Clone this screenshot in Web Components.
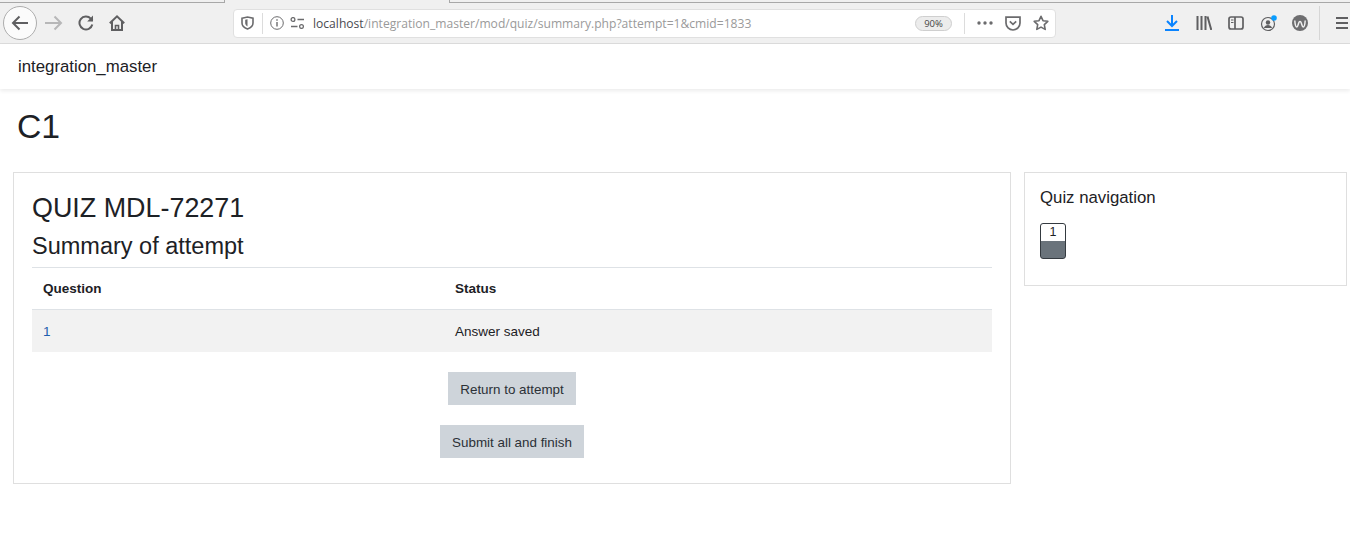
<!DOCTYPE html>
<html>
<head>
<meta charset="utf-8">
<title>Summary of attempt</title>
<style>
  html, body { margin: 0; padding: 0; background: #fff; }
  body { font-family: "Liberation Sans", Arial, sans-serif; color: #1d2125; overflow: hidden; }
</style>
</head>
<body>
<browser-bar url-host="localhost" url-path="/integration_master/mod/quiz/summary.php?attempt=1&amp;cmid=1833" zoom="90%"></browser-bar>
<site-nav>integration_master</site-nav>
<page-title>C1</page-title>
<page-columns>
  <quiz-summary>
    <h2 slot="name">QUIZ MDL-72271</h2>
    <h3 slot="sub">Summary of attempt</h3>
    <summary-table slot="table" question="1" status="Answer saved"></summary-table>
    <plain-button slot="actions">Return to attempt</plain-button>
    <plain-button slot="actions">Submit all and finish</plain-button>
  </quiz-summary>
  <quiz-nav></quiz-nav>
</page-columns>

<script>
class browserBar extends HTMLElement {
  constructor () {
    super()
    this.shadow = this.attachShadow({ mode: 'open' })
  }

  connectedCallback () {
    this.render()
  }

  render () {
    const host = this.getAttribute('url-host')
    const path = this.getAttribute('url-path')
    const zoom = this.getAttribute('zoom')
    this.shadow.innerHTML =
      /* html */`
        <style>
          :host{
            display: block;
            height: 44px;
            box-sizing: border-box;
            background: #f0f0f0;
            border-bottom: 1px solid #dcdcdc;
            position: relative;
            font-family: "Open Sans", sans-serif;
          }
          .tabline{
            position: absolute;
            top: 2px;
            left: 0;
            right: 0;
            height: 1px;
            background: #a8a8a8;
          }
          .tabgap{
            position: absolute;
            top: 0;
            left: 224px;
            width: 226px;
            height: 3px;
            box-sizing: border-box;
            background: #f0f0f0;
            border-left: 1px solid #a8a8a8;
            border-right: 1px solid #a8a8a8;
          }
          .row{
            display: flex;
            align-items: center;
            height: 43px;
            padding: 3px 0 0 3px;
            box-sizing: border-box;
          }
          svg{
            display: block;
            flex: none;
          }
          .back{
            width: 34px;
            height: 34px;
            box-sizing: border-box;
            border: 1px solid #adadad;
            border-radius: 50%;
            background: #fbfbfb;
            display: flex;
            align-items: center;
            justify-content: center;
            flex: none;
          }
          .nav{
            display: flex;
            align-items: center;
            gap: 15px;
            margin-left: 8px;
          }
          .url{
            margin-left: 108px;
            width: 823px;
            height: 29px;
            box-sizing: border-box;
            background: #fff;
            border: 1px solid #e0e0e0;
            border-radius: 4px;
            display: flex;
            align-items: center;
            padding-left: 7px;
            flex: none;
          }
          .sep{
            width: 1px;
            height: 21px;
            background: #dcdcdc;
            flex: none;
          }
          .address{
            font-size: 12.1px;
            color: #9a9a9a;
            white-space: nowrap;
            margin-left: 8px;
            width: 602px;
            overflow: hidden;
            flex: none;
          }
          .address b{
            font-weight: 400;
            color: #4a4a4f;
          }
          .zoom{
            width: 37px;
            height: 15px;
            box-sizing: border-box;
            border: 1px solid #cfcfcf;
            background: #ececec;
            border-radius: 8px;
            font-size: 9.5px;
            line-height: 13px;
            text-align: center;
            color: #444;
            flex: none;
          }
          .tools{
            display: flex;
            align-items: center;
            margin-left: 109px;
          }
          .menu-sep{
            width: 1px;
            height: 34px;
            background: #d6d6d6;
            margin: 0 15px 0 11px;
            flex: none;
          }
        </style>
        <div class="tabline"></div>
        <div class="tabgap"></div>
        <div class="row">
          <div class="back">
            <svg width="18" height="16" viewBox="0 0 18 16" fill="none" stroke="#5f5f61" stroke-width="2"><path d="M17 8H2M8.5 1.5 2 8l6.5 6.5"/></svg>
          </div>
          <div class="nav">
            <svg width="18" height="16" viewBox="0 0 18 16" fill="none" stroke="#b7b7b8" stroke-width="2"><path d="M0 8h15M9.5 1.500 16 8l-6.500 6.500"/></svg>
            <svg width="16" height="16" viewBox="0 0 16 16" fill="none" stroke="#5f5f61" stroke-width="2"><path d="M14.300 9.500A6.500 6.500 0 1 1 12.800 3.600L14.500 5.500"/><path d="M15 .6V6.400H9.200" fill="#5f5f61" stroke="none"/></svg>
            <svg width="16" height="16" viewBox="0 0 16 16" fill="none" stroke="#5f5f61" stroke-width="2"><path d="M.8 8.300 8 1.400l7.200 6.900M3 6.600V15h10V6.600"/><path d="M6.500 15v-4.500h3V15" stroke-width="1.600"/></svg>
          </div>
          <div class="url">
            <svg width="13" height="14" viewBox="0 0 13 14" fill="none" stroke="#6b6b6d" stroke-width="1.600"><path d="M1 2.200 6.500 1 12 2.200V7c0 3-2.500 5-5.500 6C3.500 12 1 10 1 7z"/><path d="M4.200 3.700 6.500 3.200V10.400C5 9.800 4.200 8.500 4.200 7z" fill="#6b6b6d" stroke="none"/></svg>
            <div class="sep" style="margin:0 7px 0 8px"></div>
            <svg width="14" height="14" viewBox="0 0 14 14" fill="none" stroke="#6b6b6d" stroke-width="1"><circle cx="7" cy="7" r="6.300"/><path d="M7 6v4.500" stroke-width="1.400"/><path d="M7 3.200v1.500" stroke-width="1.400"/></svg>
            <svg style="margin-left:6px" width="15" height="12" viewBox="0 0 15 12" fill="none" stroke="#6b6b6d" stroke-width="1.300"><circle cx="3" cy="2.500" r="1.900"/><path d="M7.500 2.500H14M1 9.500h6.500"/><circle cx="11.500" cy="9.500" r="1.900"/></svg>
            <div class="address"><b>${host}</b>${path}</div>
            <div class="zoom">${zoom}</div>
            <div class="sep" style="margin-left:12px"></div>
            <svg style="margin-left:12px" width="16" height="4" viewBox="0 0 16 4" fill="#6b6b6d"><circle cx="2" cy="2" r="1.700"/><circle cx="8" cy="2" r="1.700"/><circle cx="14" cy="2" r="1.700"/></svg>
            <svg style="margin-left:12px" width="16" height="15" viewBox="0 0 16 15" fill="none" stroke="#6b6b6d" stroke-width="1.700"><path d="M1 1.200h14V7a7 7 0 0 1-14 0z"/><path d="M4.800 5.400 8 8.400l3.200-3"/></svg>
            <svg style="margin-left:12px" width="16" height="16" viewBox="0 0 16 16" fill="none" stroke="#6b6b6d" stroke-width="1.600" stroke-linejoin="round"><path d="M8 1.300 10 5.700l4.800.6-3.500 3.300.9 4.800L8 12.100 3.800 14.400l.9-4.800L1.200 6.300 6 5.700z"/></svg>
          </div>
          <div class="tools">
            <svg width="14" height="16" viewBox="0 0 14 16" fill="none" stroke="#0a84ff" stroke-width="2"><path d="M7 0v10.500M2 6l5 5 5-5"/><path d="M0 15h14"/></svg>
            <svg style="margin-left:17px" width="16" height="14" viewBox="0 0 16 14" fill="none" stroke="#5f5f61" stroke-width="2"><path d="M1.500 0v14M5.500 0v14M9.500 0v14M11.500 .4 15.300 14"/></svg>
            <svg style="margin-left:16px" width="16" height="14" viewBox="0 0 16 14" fill="none" stroke="#5f5f61" stroke-width="1.700"><rect x="1" y="1" width="14" height="12" rx="2"/><path d="M7 1v12"/><path d="M3 4h2.500M3 6.500h2.500" stroke-width="1.200"/></svg>
            <svg style="margin-left:16px" width="18" height="18" viewBox="0 0 18 18" fill="none" stroke="#5f5f61"><circle cx="8" cy="10" r="6.500" stroke-width="1.200"/><circle cx="8" cy="8.500" r="2.200" fill="#5f5f61" stroke="none"/><path d="M3.800 14c.8-2 2.400-3 4.200-3s3.400 1 4.200 3" fill="#5f5f61" stroke="none"/><circle cx="14" cy="4" r="2.800" fill="#0a9dff" stroke="none"/></svg>
            <svg style="margin-left:14px" width="16" height="16" viewBox="0 0 16 16" fill="none"><circle cx="8" cy="8" r="8" fill="#6e6e70"/><path d="M2.800 5.500C3.100 10 3.700 12 4.800 12c1.500 0 1.400-5.500 3.200-5.500s1.700 5.500 3.200 5.500c1.100 0 1.700-2 2-6.500" stroke="#f0f0f0" stroke-width="1.500"/></svg>
            <div class="menu-sep"></div>
            <svg width="14" height="12" viewBox="0 0 14 12" fill="none" stroke="#5f5f61" stroke-width="2"><path d="M1 1h12M1 6h12M1 11h12"/></svg>
          </div>
        </div>
      `
  }
}

class siteNav extends HTMLElement {
  constructor () {
    super()
    this.shadow = this.attachShadow({ mode: 'open' })
  }

  connectedCallback () {
    this.shadow.innerHTML =
      /* html */`
        <style>
          :host{
            display: flex;
            align-items: center;
            height: 45px;
            padding-left: 18px;
            background: #fff;
            box-shadow: 0 2px 4px rgba(0,0,0,.08);
            font-size: 16.800px;
            color: #1d2125;
            position: relative;
          }
        </style>
        <slot></slot>
      `
  }
}

class pageTitle extends HTMLElement {
  constructor () {
    super()
    this.shadow = this.attachShadow({ mode: 'open' })
  }

  connectedCallback () {
    this.shadow.innerHTML =
      /* html */`
        <style>
          :host{
            display: block;
            padding: 17px 0 0 17px;
            height: 49px;
            font-size: 33.750px;
            line-height: 40px;
            color: #1d2125;
          }
        </style>
        <slot></slot>
      `
  }
}

class pageColumns extends HTMLElement {
  constructor () {
    super()
    this.shadow = this.attachShadow({ mode: 'open' })
  }

  connectedCallback () {
    this.shadow.innerHTML =
      /* html */`
        <style>
          :host{
            display: flex;
            align-items: flex-start;
            gap: 13px;
            padding: 17px 3px 0 13px;
          }
        </style>
        <slot></slot>
      `
  }
}

class quizSummary extends HTMLElement {
  constructor () {
    super()
    this.shadow = this.attachShadow({ mode: 'open' })
  }

  connectedCallback () {
    this.shadow.innerHTML =
      /* html */`
        <style>
          :host{
            display: block;
            width: 998px;
            height: 312px;
            box-sizing: border-box;
            border: 1px solid #dfdfdf;
            padding: 18px 18px 0 18px;
            flex: none;
          }
          ::slotted(h2){
            margin: 0;
            font-size: 26.900px;
            line-height: 34px;
            font-weight: 400;
          }
          ::slotted(h3){
            margin: 7px 0 7px;
            font-size: 23.500px;
            line-height: 28px;
            font-weight: 400;
          }
          .actions{
            display: flex;
            flex-direction: column;
            align-items: center;
            gap: 20px;
            margin-top: 20px;
          }
        </style>
        <slot name="name"></slot>
        <slot name="sub"></slot>
        <slot name="table"></slot>
        <div class="actions"><slot name="actions"></slot></div>
      `
  }
}

class summaryTable extends HTMLElement {
  constructor () {
    super()
    this.shadow = this.attachShadow({ mode: 'open' })
  }

  connectedCallback () {
    this.shadow.innerHTML =
      /* html */`
        <style>
          :host{
            display: block;
            font-size: 13.500px;
          }
          .row{
            display: grid;
            grid-template-columns: 412px 1fr;
            align-items: center;
            padding-left: 11px;
          }
          .head{
            height: 40px;
            padding-bottom: 1px;
            border-top: 1px solid #dee2e6;
            border-bottom: 1px solid #dee2e6;
            font-weight: 700;
          }
          .body{
            height: 42px;
            background: #f2f2f2;
          }
          a{
            color: #1f5fae;
            text-decoration: none;
          }
        </style>
        <div class="row head"><span>Question</span><span>Status</span></div>
        <div class="row body"><span><a href="#">${this.getAttribute('question')}</a></span><span>${this.getAttribute('status')}</span></div>
      `
  }
}

class plainButton extends HTMLElement {
  constructor () {
    super()
    this.shadow = this.attachShadow({ mode: 'open' })
  }

  connectedCallback () {
    this.shadow.innerHTML =
      /* html */`
        <style>
          :host{
            display: block;
            width: max-content;
            height: 33px;
            box-sizing: border-box;
            padding: 1px 12px 0;
            background: #ced4da;
            color: #2b3036;
            font-size: 13.400px;
            line-height: 33px;
          }
        </style>
        <slot></slot>
      `
  }
}

class quizNav extends HTMLElement {
  constructor () {
    super()
    this.shadow = this.attachShadow({ mode: 'open' })
  }

  connectedCallback () {
    this.shadow.innerHTML =
      /* html */`
        <style>
          :host{
            display: block;
            width: 323px;
            height: 114px;
            box-sizing: border-box;
            border: 1px solid #dfdfdf;
            padding: 15px 15px 0 15px;
            flex: none;
          }
          h4{
            margin: 0 0 15px;
            font-size: 16.800px;
            line-height: 20px;
            font-weight: 400;
          }
          .btn{
            width: 26px;
            height: 36px;
            box-sizing: border-box;
            border: 1px solid #343a40;
            border-radius: 3px;
            overflow: hidden;
            background: linear-gradient(#fff 0 17px, #6a737b 17px);
            font-size: 12.500px;
            line-height: 17px;
            text-align: center;
          }
        </style>
        <h4>Quiz navigation</h4>
        <div class="btn">1</div>
      `
  }
}

customElements.define('browser-bar', browserBar)
customElements.define('site-nav', siteNav)
customElements.define('page-title', pageTitle)
customElements.define('page-columns', pageColumns)
customElements.define('quiz-summary', quizSummary)
customElements.define('summary-table', summaryTable)
customElements.define('plain-button', plainButton)
customElements.define('quiz-nav', quizNav)
</script>
</body>
</html>
